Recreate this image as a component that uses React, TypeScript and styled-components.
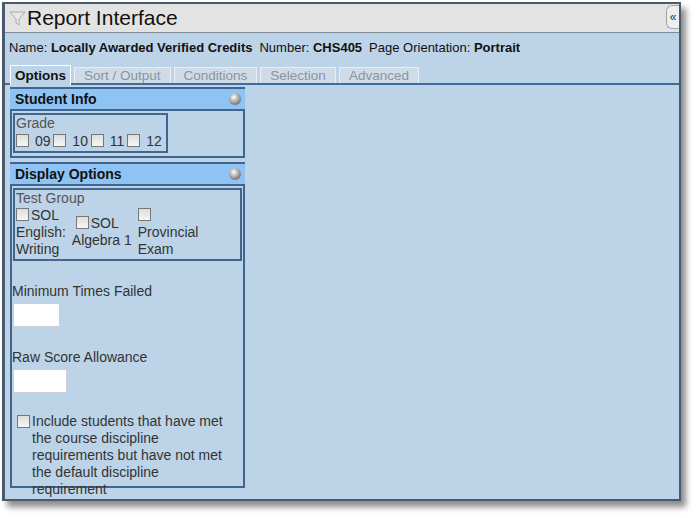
import React from "react";
import styled, { createGlobalStyle } from "styled-components";

const G = createGlobalStyle`
  html,body{margin:0;padding:0;background:#fff;}
  body{font-family:"Liberation Sans",Arial,sans-serif;}
`;
const Stage = styled.div`width:700px;height:518px;padding:2px 0 0 2px;box-sizing:border-box;`;
const Win = styled.div`
  width:679px;height:499px;box-sizing:border-box;border:2px solid #4a5a6e;border-left-width:3px;
  background:#bcd3e8;display:flex;flex-direction:column;
  box-shadow:5px 6px 6px rgba(0,0,0,0.45);
`;
const Title = styled.div`
  height:28px;background:#e3e3e3;border-bottom:1px solid #7f8c99;display:flex;align-items:center;
  padding-left:4px;font-size:21px;color:#111;position:relative;
`;
const Collapse = styled.div`
  position:absolute;right:0;top:1px;width:12px;height:22px;border:1px solid #9aa;border-right:none;
  border-radius:6px 0 0 6px;font-size:12px;color:#333;display:flex;align-items:center;justify-content:center;background:#eee;
`;
const Info = styled.div`font-size:13px;color:#111;padding:7px 0 0 4px;height:24px;box-sizing:border-box;
  b{font-weight:bold;} span{margin-right:7px;}`;
const Tabs = styled.div`display:flex;align-items:flex-end;margin-top:9px;padding-left:5px;border-bottom:2px solid #3f6c9c;height:17px;`;
const Tab = styled.div<{ $a?: boolean }>`
  font-size:13.5px;height:${p => (p.$a ? 19 : 16)}px;box-sizing:border-box;padding:0 ${p => (p.$a ? 4 : 9)}px;margin-right:3px;
  display:flex;align-items:center;
  background:${p => (p.$a ? "#bcd3e8" : "#cfdce8")};color:${p => (p.$a ? "#111" : "#8a949e")};
  font-weight:${p => (p.$a ? "bold" : "normal")};border:1px solid ${p => (p.$a ? "#fff" : "#e8eef4")};border-bottom:none;
  ${p => p.$a && "margin-bottom:-2px;height:20px;"}
`;
const Col = styled.div`width:235px;margin:2px 0 0 5px;display:flex;flex-direction:column;gap:4px;`;
const Panel = styled.div<{ $h?: number }>`border:2px solid #40668f;border-top:none;${p => p.$h ? `height:${p.$h}px;` : ""}box-sizing:border-box;`;
const Head = styled.div`
  height:20px;background:#8fc3f4;border-top:2px solid #40668f;border-bottom:2px solid #40668f;margin:0 -2px;
  display:flex;align-items:center;justify-content:space-between;padding:0 4px 0 5px;font-weight:bold;font-size:14px;color:#111;
`;
const Ball = styled.div`width:12px;height:12px;border-radius:50%;background:radial-gradient(circle at 40% 35%,#fff 0,#bbb 35%,#444 100%);`;
const Box = styled.div<{ $w?: string }>`border:2px solid #40668f;margin:2px 1px 2px 1px;width:${p => p.$w || "auto"};box-sizing:border-box;padding:0 2px 1px 1px;color:#555;font-size:14px;line-height:17px;`;
const Row = styled.div`display:flex;gap:3px;align-items:center;margin-top:1px;`;
const Ck = styled.span`display:inline-block;width:11px;height:11px;border:1px solid #777;background:linear-gradient(#ddd,#f6f6f6);vertical-align:-1px;margin-right:2px;`;
const Opt = styled.label`font-size:14px;color:#333;line-height:17px;`;
const TG = styled.div`display:flex;gap:6px;align-items:flex-start;`;
const Label = styled.div`font-size:14px;color:#333;margin:22px 0 4px 0;`;
const Input = styled.div<{ $w: number }>`width:${p => p.$w}px;height:22px;background:#fff;border:1px solid #ccd;margin-left:1px;`;
const Inc = styled.div`display:flex;margin:20px 0 0 5px;font-size:14px;color:#333;line-height:17px;width:220px;`;

export default function App() {
  return (
    <Stage>
      <G />
      <Win>
        <Title>
          <svg width="17" height="17" viewBox="0 0 17 17" style={{ marginRight: 1 }}>
            <path d="M1 2H16L10 9V15L7 13V9Z" fill="#e8e8e8" stroke="#aaa" />
          </svg>
          Report Interface
          <Collapse>«</Collapse>
        </Title>
        <Info>
          <span>Name: <b>Locally Awarded Verified Credits</b></span>
          <span>Number: <b>CHS405</b></span>
          <span>Page Orientation: <b>Portrait</b></span>
        </Info>
        <Tabs>
          <Tab $a>Options</Tab>
          <Tab>Sort / Output</Tab>
          <Tab>Conditions</Tab>
          <Tab>Selection</Tab>
          <Tab>Advanced</Tab>
        </Tabs>
        <Col>
          <Panel $h={71}>
            <Head>Student Info<Ball /></Head>
            <Box $w="155px">
              Grade
              <Row>
                <Opt><Ck /> 09</Opt><Opt><Ck /> 10</Opt><Opt><Ck /> 11</Opt><Opt><Ck /> 12</Opt>
              </Row>
            </Box>
          </Panel>
          <Panel $h={326}>
            <Head>Display Options<Ball /></Head>
            <Box>
              Test Group
              <TG>
                <Opt><Ck />SOL<br />English:<br />Writing</Opt>
                <Opt style={{ marginTop: 8 }}>&nbsp;<Ck />SOL<br />Algebra 1</Opt>
                <Opt><Ck /><br />Provincial<br />Exam</Opt>
              </TG>
            </Box>
            <Label>Minimum Times Failed</Label>
            <Input $w={45} />
            <Label>Raw Score Allowance</Label>
            <Input $w={52} />
            <Inc>
              <Ck style={{ flexShrink: 0, marginTop: 2 }} />
              <span>Include students that have met the course discipline requirements but have not met the default discipline requirement</span>
            </Inc>
          </Panel>
        </Col>
      </Win>
    </Stage>
  );
}
